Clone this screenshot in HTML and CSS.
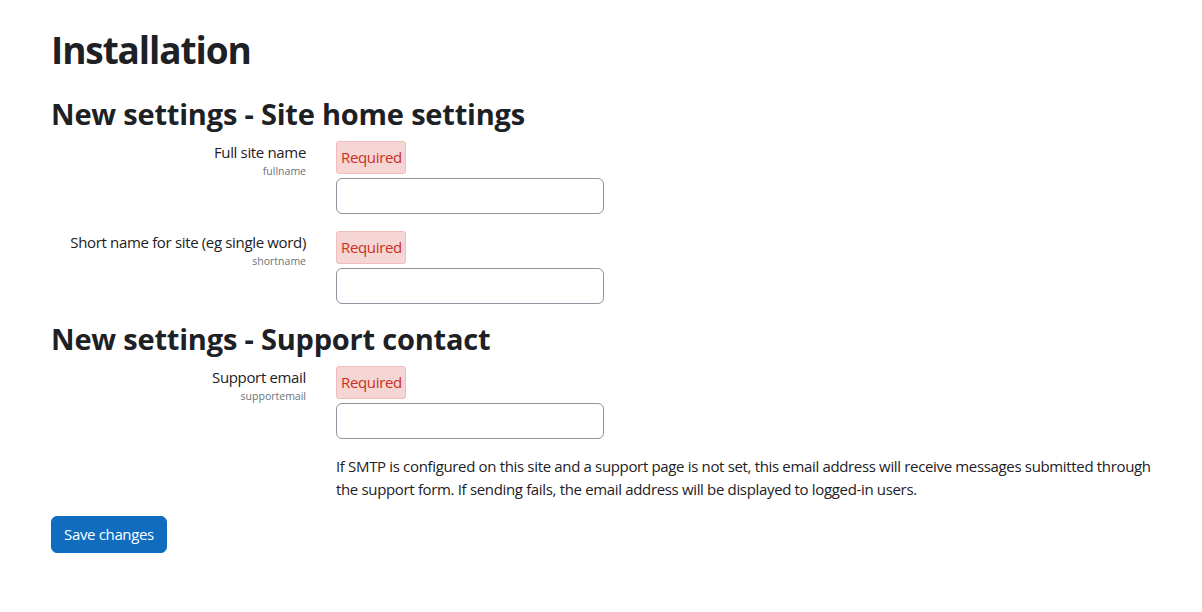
FILE: index.html
```html
<!DOCTYPE html>
<html lang="en">
<head>
<meta charset="utf-8">
<title>Installation</title>
<link rel="stylesheet" href="styles.css">
</head>
<body>
<main class="page">
  <h1 class="title">Installation</h1>
  <form class="settings">
    <h2 class="section">New settings - Site home settings</h2>
    <div class="row">
      <div class="label">
        <label class="name">Full site name</label>
        <span class="key">fullname</span>
      </div>
      <div class="field">
        <span class="badge">Required</span>
        <input class="input" type="text">
      </div>
    </div>
    <div class="row">
      <div class="label">
        <label class="name">Short name for site (eg single word)</label>
        <span class="key">shortname</span>
      </div>
      <div class="field">
        <span class="badge">Required</span>
        <input class="input" type="text">
      </div>
    </div>
    <h2 class="section">New settings - Support contact</h2>
    <div class="row row-last">
      <div class="label">
        <label class="name">Support email</label>
        <span class="key">supportemail</span>
      </div>
      <div class="field">
        <span class="badge">Required</span>
        <input class="input" type="text">
        <p class="desc">If SMTP is configured on this site and a support page is not set, this email address will receive messages submitted through the support form. If sending fails, the email address will be displayed to logged-in users.</p>
      </div>
    </div>
    <button class="btn" type="button">Save changes</button>
  </form>
</main>
</body>
</html>
```

FILE: styles.css
```css
* { box-sizing: border-box; }
body {
  margin: 0;
  background: #fff;
  color: #1d2125;
  font-family: "Open Sans", "Noto Sans", sans-serif;
  font-size: 15px;
  line-height: 23px;
  letter-spacing: -0.34px;
}
.page {
  padding: 28px 36px 0 51px;
}
.title {
  margin: 0 0 24px 0;
  font-size: 37px;
  font-weight: 700;
  line-height: 44px;
  letter-spacing: -1.1px;
}
.section {
  margin: 0 0 10px 0;
  font-size: 29px;
  font-weight: 700;
  line-height: 35px;
  letter-spacing: -0.2px;
}
.row {
  display: grid;
  grid-template-columns: 255px 1fr;
  column-gap: 30px;
  margin-bottom: 17px;
}
.row-last {
  margin-bottom: 15px;
}
.label {
  display: flex;
  flex-direction: column;
  align-items: flex-end;
  text-align: right;
}
.name {
  font-size: 15px;
  line-height: 23px;
}
.key {
  font-size: 10.5px;
  letter-spacing: 0;
  color: #6a737b;
  line-height: 15px;
}
.field {
  display: flex;
  flex-direction: column;
  align-items: flex-start;
}
.badge {
  display: inline-block;
  padding: 4px 3px 4px 4px;
  background: #f6d5d5;
  border: 1px solid #f0bcbc;
  border-radius: 3px;
  color: #ca3120;
  font-size: 15px;
  line-height: 23px;
  margin-bottom: 4px;
}
.input {
  width: 268px;
  height: 36px;
  border: 1px solid #8f959e;
  border-radius: 6px;
  background: #fff;
  font: inherit;
}
.desc {
  margin: 16px 0 0 0;
  line-height: 23px;
}
.btn {
  margin: 0;
  padding: 6px 12px;
  background: #0f6cbf;
  color: #fff;
  border: 1px solid #0f6cbf;
  border-radius: 6px;
  font: inherit;
  font-size: 15px;
  line-height: 23px;
  letter-spacing: -0.34px;
}
```
